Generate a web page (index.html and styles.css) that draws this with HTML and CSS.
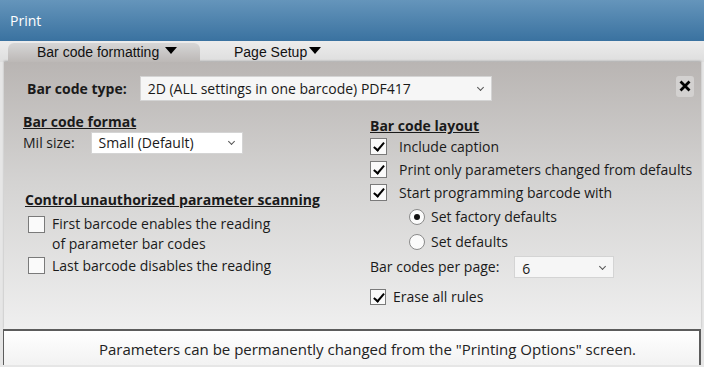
FILE: index.html
```html
<!DOCTYPE html>
<html lang="en">
<head>
    <meta charset="UTF-8">
    <title>Print</title>
    <link rel="stylesheet" href="styles.css">
</head>
<body>
    <div class="titlebar">Print</div>

    <div class="tabs">
        <div class="tab active">Bar code formatting <span class="arrow"></span></div>
        <div class="tab second">Page Setup<span class="arrow"></span></div>
    </div>

    <div class="panel">
        <div class="typerow">
            <span class="bold">Bar code type:</span>
            <div class="select wide">2D (ALL settings in one barcode) PDF417 <span class="chev"></span></div>
            <div class="close">
                <svg width="12" height="12" viewBox="0 0 12 12"><path d="M1.5 1.5 L10.5 10.5 M10.5 1.5 L1.5 10.5" stroke="#000" stroke-width="2.8" fill="none"/></svg>
            </div>
        </div>

        <div class="columns">
            <div class="col left">
                <div class="heading">Bar code format</div>
                <div class="row">
                    <span>Mil size:</span>
                    <div class="select mil">Small (Default) <span class="chev"></span></div>
                </div>

                <div class="heading control">Control unauthorized parameter scanning</div>
                <div class="row top">
                    <span class="box"></span>
                    <span>First barcode enables the reading<br>of parameter bar codes</span>
                </div>
                <div class="row">
                    <span class="box"></span>
                    <span>Last barcode disables the reading</span>
                </div>
            </div>

            <div class="col right">
                <div class="heading">Bar code layout</div>
                <div class="row"><span class="box checked"></span><span>Include caption</span></div>
                <div class="row"><span class="box checked"></span><span>Print only parameters changed from defaults</span></div>
                <div class="row"><span class="box checked"></span><span>Start programming barcode with</span></div>
                <div class="row radio"><span class="dot on"></span><span>Set factory defaults</span></div>
                <div class="row radio"><span class="dot"></span><span>Set defaults</span></div>
                <div class="row per">
                    <span>Bar codes per page:</span>
                    <div class="select count">6 <span class="chev"></span></div>
                </div>
                <div class="row erase"><span class="box checked small"></span><span>Erase all rules</span></div>
            </div>
        </div>
    </div>

    <div class="footer">Parameters can be permanently changed from the "Printing Options" screen.</div>
</body>
</html>
```

FILE: styles.css
```css
body {
    margin: 0;
    width: 704px;
    height: 367px;
    overflow: hidden;
    background-color: #e6e6e6;
    font-family: "Open Sans", "Noto Sans", sans-serif;
    font-size: 13px;
    color: #1a1a1a;
}

.titlebar {
    height: 41px;
    padding-left: 10px;
    display: flex;
    align-items: center;
    color: #fff;
    font-size: 14px;
    background: linear-gradient(#6595bb, #3a72a0);
}

.tabs {
    height: 21px;
    padding-left: 8px;
    display: flex;
    align-items: flex-end;
    background: linear-gradient(#ececec, #dedede);
    font-family: "Liberation Sans", Arial, sans-serif;
    font-size: 14px;
    color: #111;
}

.tab {
    height: 19px;
    line-height: 19px;
    padding-left: 29px;
    width: 163px;
}

.tab.second {
    padding-left: 34px;
}

.tab.active {
    border-radius: 6px 6px 0 0;
    background: linear-gradient(#d6d6d6, #bcb8b6);
}

.arrow {
    display: inline-block;
    width: 0;
    height: 0;
    border-left: 6px solid transparent;
    border-right: 6px solid transparent;
    border-top: 7px solid #000;
    vertical-align: 3px;
    margin-left: 2px;
}

.panel {
    height: 267px;
    margin: 0 3px 0 4px;
    box-sizing: border-box;
    padding-top: 14px;
    background: linear-gradient(#b9b5b3, #d4d3d2 45%, #efefef);
    box-shadow: 0 -1px 2px rgba(0, 0, 0, 0.25);
}

.bold, .heading {
    font-weight: bold;
    font-size: 14px;
}

.typerow {
    display: flex;
    align-items: center;
    padding-left: 23px;
    height: 25px;
}

.select {
    box-sizing: border-box;
    display: flex;
    align-items: center;
    justify-content: space-between;
    background-color: #f6f6f6;
    border: 1px solid #d4d4d4;
    padding: 0 8px 0 7px;
    font-size: 14px;
}

.select.wide {
    width: 352px;
    height: 25px;
    margin-left: 13px;
}

.select.mil {
    width: 152px;
    height: 22px;
    margin-left: 16px;
    background-color: #fff;
}

.select.count {
    width: 100px;
    height: 22px;
    margin-left: 15px;
    padding-top: 3px;
}

.chev {
    width: 4px;
    height: 4px;
    border-right: 1px solid #555;
    border-bottom: 1px solid #555;
    transform: rotate(45deg);
    margin-bottom: 3px;
}

.close {
    margin-left: auto;
    margin-right: 7px;
    width: 18px;
    height: 21px;
    margin-top: -5px;
    display: flex;
    align-items: center;
    justify-content: center;
    background-color: #d3d1d0;
    border-radius: 3px;
}

.columns {
    display: flex;
}

.col.left {
    width: 347px;
    padding-left: 19px;
    padding-top: 12px;
}

.col.right {
    padding-top: 16px;
}

.heading {
    text-decoration: underline;
    height: 18px;
    line-height: 18px;
}

.heading.control {
    margin-top: 37px;
    margin-left: 2px;
    margin-bottom: 5px;
}

.row {
    display: flex;
    align-items: center;
    min-height: 23px;
    font-size: 14px;
}

.row.top {
    align-items: flex-start;
    line-height: 20px;
}

.row.top .box {
    margin-top: 2px;
}

.left .box {
    margin-left: 5px;
    margin-right: 7px;
}

.box {
    box-sizing: border-box;
    width: 17px;
    height: 17px;
    border: 1px solid #7a7a7a;
    background-color: #fafafa;
    margin-right: 12px;
    position: relative;
    flex: none;
}

.box.checked::after {
    content: "";
    position: absolute;
    left: 5px;
    top: 1px;
    width: 4px;
    height: 9px;
    border-right: 2px solid #000;
    border-bottom: 2px solid #000;
    transform: rotate(40deg);
}

.box.small {
    width: 16px;
    height: 16px;
    margin-right: 7px;
}

.row.radio {
    min-height: 25px;
    padding-left: 39px;
}

.dot {
    box-sizing: border-box;
    width: 16px;
    height: 16px;
    border: 1px solid #8a8a8a;
    border-radius: 50%;
    background-color: #fbfbfb;
    margin-right: 6px;
    display: flex;
    align-items: center;
    justify-content: center;
}

.dot.on::after {
    content: "";
    width: 6px;
    height: 6px;
    border-radius: 50%;
    background-color: #111;
}

.row.per {
    margin-top: 1px;
}

.row.erase {
    margin-top: 7px;
}

.footer {
    height: 36px;
    margin: 0 3px;
    border-style: solid;
    border-color: #5c5c5c;
    border-width: 2px 2px 0 1px;
    background: linear-gradient(#ffffff, #f2f2f2);
    display: flex;
    align-items: center;
    justify-content: center;
    padding-top: 2px;
    padding-left: 32px;
    box-sizing: border-box;
    font-size: 15px;
    color: #222;
}
```
